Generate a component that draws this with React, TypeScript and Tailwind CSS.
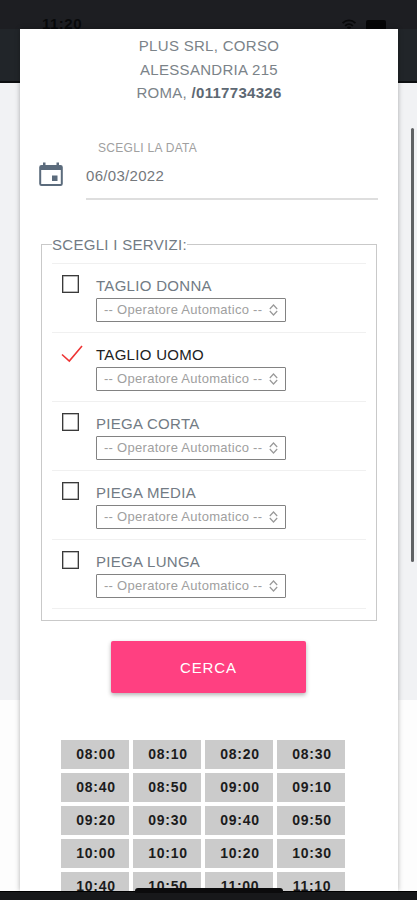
const services = [
  { name: "TAGLIO DONNA", checked: false },
  { name: "TAGLIO UOMO", checked: true },
  { name: "PIEGA CORTA", checked: false },
  { name: "PIEGA MEDIA", checked: false },
  { name: "PIEGA LUNGA", checked: false },
];

const slots = [
  "08:00", "08:10", "08:20", "08:30",
  "08:40", "08:50", "09:00", "09:10",
  "09:20", "09:30", "09:40", "09:50",
  "10:00", "10:10", "10:20", "10:30",
  "10:40", "10:50", "11:00", "11:10",
];

function Backdrop() {
  return (
    <div className="absolute inset-0 flex flex-col bg-[#fdfdfd]">
      <div className="h-[29px] bg-[#1d1e22]" />
      <div className="h-[54px] border-b-2 border-[#0c0e10] bg-[#212529]" />
      <div className="h-[617px] bg-[#f1f2f4]" />
    </div>
  );
}

function StatusBar() {
  return (
    <div className="relative flex h-[29px] items-end justify-between pl-[42px] pr-[31px]">
      <span className="-mb-[4px] text-[15px] font-bold leading-[18px] tracking-[0.5px] text-[#08090a]">11:20</span>
      <div className="flex items-end gap-[9px]">
        <svg width="16" height="11" viewBox="0 0 16 12" fill="none" stroke="#08090a" strokeWidth="2" className="-mb-[1px]">
          <path d="M1 4.5C5 .6 11 .6 15 4.5" />
          <path d="M3.8 7.5c2.5-2.3 5.9-2.3 8.4 0" />
          <path d="M6.3 10c1-1 2.4-1 3.4 0" />
        </svg>
        <div className="h-[9px] w-[20px] rounded-t-[2px] bg-[#050506]" />
      </div>
    </div>
  );
}

function CalendarIcon() {
  return (
    <svg width="24" height="25" viewBox="0 0 24 25" className="shrink-0">
      <path
        fill="#5b6b7c"
        fillRule="evenodd"
        d="M4 .5h2.500V3h11V.5H20V3h1.500a2.300 2.300 0 0 1 2.300 2.300v16.400a2.300 2.300 0 0 1-2.300 2.300h-19A2.300 2.300 0 0 1 .2 21.700V5.300A2.300 2.300 0 0 1 2.500 3H4zM2.200 8v14h19.600V8z"
      />
      <rect x="13" y="13.500" width="5.500" height="5.500" fill="#5b6b7c" />
    </svg>
  );
}

function Service({ name, checked }: { name: string; checked: boolean }) {
  return (
    <div className="flex h-[69px] border-t border-[#f0f0f0] pl-[9px] pt-[11px]">
      <div className="w-[35px] shrink-0">
        {checked ? (
          <svg width="22" height="18" viewBox="0 0 22 18" fill="none" stroke="#ee3434" strokeWidth="1.6" className="mt-px">
            <path d="M1 9.500l7.300 6.500L21 1" />
          </svg>
        ) : (
          <div className="ml-px h-[18px] w-[17px] border-[1.500px] border-[#3a3a3a] shadow-[inset_0_0_0_0.500px_#777]" />
        )}
      </div>
      <div>
        <p className={`h-[23px] text-[15px] leading-[22px] tracking-[0.3px] ${checked ? "text-[#222]" : "text-[#727b84]"}`}>
          {name}
        </p>
        <div className="flex h-[24px] w-[190px] items-center justify-between rounded-[1px] border border-[#828282] pl-[7px] pr-[7px]">
          <span className="whitespace-nowrap text-[13px] leading-none tracking-[0.28px] text-[#a0a0a0]">-- Operatore Automatico --</span>
          <svg width="9" height="12" viewBox="0 0 9 12" fill="none" stroke="#999" strokeWidth="1.200" className="shrink-0">
            <path d="M.8 5l3.700-4 3.700 4M.8 7l3.700 4 3.700-4" />
          </svg>
        </div>
      </div>
    </div>
  );
}

export default function App() {
  return (
    <div className="relative h-[900px] w-[417px] overflow-hidden font-['Liberation_Sans',Arial,sans-serif]">
      <Backdrop />
      <StatusBar />

      <div className="relative ml-[20px] h-[862px] w-[378px] bg-white shadow-[0_0_5px_rgba(0,0,0,0.3)]">
        <div className="flex h-full flex-col overflow-hidden">
          <div className="pt-[5px] text-center text-[15px] leading-[23.500px] tracking-[0.3px] text-[#7b8389]">
            <p>PLUS SRL, CORSO</p>
            <p>ALESSANDRIA 215</p>
            <p>
              ROMA, <b className="text-[#5d6873]">/0117734326</b>
            </p>
          </div>

          <div className="mt-[31px] flex h-[99px] shrink-0 pl-[19px]">
            <div className="pt-[26px]">
              <CalendarIcon />
            </div>
            <div className="ml-[23px] h-[64px] w-[292px] border-b-2 border-[#dedede]">
              <p className="pl-[12px] pt-[2px] text-[12px] leading-[20px] tracking-[0.3px] text-[#a0a0a0]">SCEGLI LA DATA</p>
              <p className="mt-[8px] text-[15px] leading-[20px] tracking-[0.3px] text-[#74787c]">06/03/2022</p>
            </div>
          </div>

          <fieldset className="ml-[21px] h-[386px] w-[336px] shrink-0 border border-[#c9c9c9] px-[10px]">
            <legend className="h-[20px] text-[15px] leading-[20px] tracking-[0.3px] text-[#727b84]">SCEGLI I SERVIZI:</legend>
            <div className="mt-[8px] border-b border-[#f0f0f0]">
              {services.map((s) => (
                <Service key={s.name} name={s.name} checked={s.checked} />
              ))}
            </div>
          </fieldset>

          <button className="ml-[91px] mt-[20px] h-[52px] w-[195px] shrink-0 rounded-[2px] bg-[#ff4081] pt-[3px] text-[15px] tracking-[0.9px] text-white shadow-[0_2px_4px_rgba(0,0,0,0.3)]">
            CERCA
          </button>

          <div className="ml-[41px] mt-[47px] grid w-[284px] shrink-0 grid-cols-4 gap-1">
            {slots.map((t) => (
              <div key={t} className="flex h-[29px] items-center justify-center bg-[#cbcbcb] pl-[2px] pt-px text-[14px] font-bold tracking-[0.7px] text-[#1c1c1c]">
                {t}
              </div>
            ))}
          </div>
        </div>
      </div>

      <div className="relative h-[9px] border-t border-black bg-[#17181a]" />
      <div className="absolute left-[135px] top-[888px] h-[5px] w-[148px] rounded-t-[3px] bg-[#0b0b0c]" />
      <div className="absolute left-[411px] top-[128px] h-[434px] w-[3px] rounded-full bg-[#606264]" />
    </div>
  );
}
